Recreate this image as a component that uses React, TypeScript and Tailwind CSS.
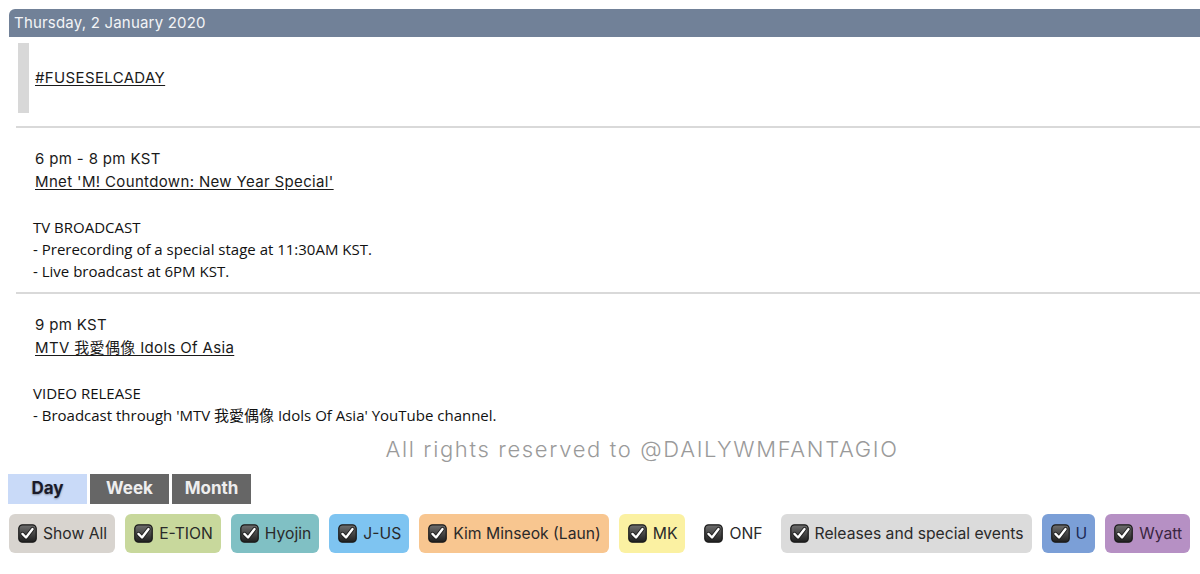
import React from "react"

const heading = "font-['Inter','Noto_Sans_CJK_TC',sans-serif]"
const body = "font-['Open_Sans','Noto_Sans_CJK_TC',sans-serif]"

type Filter = { label: string; bg: string; text: string }

const filters: Filter[] = [
  { label: "Show All", bg: "bg-[#d8d4cf]", text: "text-[#2a2a2a]" },
  { label: "E-TION", bg: "bg-[#c8d89c]", text: "text-[#2a2a2a]" },
  { label: "Hyojin", bg: "bg-[#80c0c4]", text: "text-[#2a2a2a]" },
  { label: "J-US", bg: "bg-[#7ec4f1]", text: "text-[#2a2a2a]" },
  { label: "Kim Minseok (Laun)", bg: "bg-[#f8c690]", text: "text-[#2a2a2a]" },
  { label: "MK", bg: "bg-[#fbf1a2]", text: "text-[#2a2a2a]" },
  { label: "ONF", bg: "bg-transparent", text: "text-[#2a2a2a]" },
  { label: "Releases and special events", bg: "bg-[#dbdbdb]", text: "text-[#2a2a2a]" },
  { label: "U", bg: "bg-[#7b9fd7]", text: "text-[#1c2a55]" },
  { label: "Wyatt", bg: "bg-[#b690c4]", text: "text-[#3a2540]" },
]

// glossy dark checkbox with white tick
const CheckBox = () => (
  <svg width="19" height="19" viewBox="0 0 18 18" className="flex-none">
    <defs>
      <linearGradient id="cbg" x1="0" y1="0" x2="0" y2="1">
        <stop offset="0" stopColor="#707070" />
        <stop offset="1" stopColor="#1e1e1e" />
      </linearGradient>
    </defs>
    <rect x="0.75" y="0.75" width="16.5" height="16.5" rx="3.5" fill="url(#cbg)" stroke="#1a1a1a" strokeWidth="1.2" />
    <path d="M4.2 9.4 L7.6 12.8 L13.8 4.8" fill="none" stroke="#222" strokeWidth="4" strokeLinecap="round" strokeLinejoin="round" />
    <path d="M4.2 9.4 L7.6 12.8 L13.8 4.8" fill="none" stroke="#fff" strokeWidth="2.2" strokeLinecap="round" strokeLinejoin="round" />
  </svg>
)

const Divider = () => <div className="ml-[16px] h-[2px] bg-[#d9d9d9]" />

const Event = ({ time, title, kind, lines }: { time: string; title: string; kind: string; lines: string[] }) => (
  <div className="pl-[33px] pt-[19px]">
    <div className={`${heading} pl-[2px] text-[15px] leading-[23px] tracking-[0.35px] text-[#1a1a1a]`}>{time}</div>
    <div className={`${heading} pl-[2px] text-[15px] leading-[23px] tracking-[0.35px] text-[#1a1a1a] underline underline-offset-2`}>
      {title}
    </div>
    <div className={`${body} mt-[23px] text-[15px] leading-[22px] text-[#111]`}>
      <div>{kind}</div>
      {lines.map((l) => (
        <div key={l}>{l}</div>
      ))}
    </div>
  </div>
)

export default function App() {
  return (
    <div className="w-[1200px] h-[574px] overflow-hidden bg-white">
      <div className={`${heading} ml-[9px] mt-[9px] h-[28px] rounded-tl-[6px] bg-[#718198] pl-[5px] text-[15px] leading-[28px] tracking-[0.2px] text-[#f3f4f6]`}>
        Thursday, 2 January 2020
      </div>

      <div className="pl-[18px] pt-[6px] pb-[13px]">
        <div className="flex h-[70px] items-center border-l-[11px] border-[#d8d8d8] pl-[6px]">
          <span className={`${heading} text-[15px] tracking-[0.35px] text-[#1a1a1a] underline underline-offset-2`}>#FUSESELCADAY</span>
        </div>
      </div>
      <Divider />

      <div className="pb-[10px]">
        <Event
          time="6 pm - 8 pm KST"
          title="Mnet 'M! Countdown: New Year Special'"
          kind="TV BROADCAST"
          lines={["- Prerecording of a special stage at 11:30AM KST.", "- Live broadcast at 6PM KST."]}
        />
      </div>
      <Divider />

      <Event
        time="9 pm KST"
        title="MTV 我愛偶像 Idols Of Asia"
        kind="VIDEO RELEASE"
        lines={["- Broadcast through 'MTV 我愛偶像 Idols Of Asia' YouTube channel."]}
      />

      <div className={`${heading} mt-[8px] pl-[84px] text-center text-[22px] font-light leading-[30px] tracking-[1.65px] text-[#9a9a9a]`}>
        All rights reserved to @DAILYWMFANTAGIO
      </div>

      <div className={`${heading} ml-[8px] mt-[10px] flex gap-[3px] text-[17px] font-bold`}>
        <div className="flex h-[30px] w-[79px] items-center justify-center bg-[#c9daf8] text-[#1b1b2a] [text-shadow:0_1px_2px_rgba(0,0,0,0.35)]">
          Day
        </div>
        <div className="flex h-[30px] w-[79px] items-center justify-center bg-[#666666] text-[#eeeeee]">Week</div>
        <div className="flex h-[30px] w-[79px] items-center justify-center bg-[#666666] text-[#eeeeee]">Month</div>
      </div>

      <div className="ml-[9px] mt-[10px] flex gap-[10px]">
        {filters.map((f) => (
          <div
            key={f.label}
            className={`${heading} ${f.bg} ${f.text} flex h-[39px] flex-none items-center gap-[6px] whitespace-nowrap rounded-[6px] pl-[9px] pr-[8px] text-[15.7px]`}
          >
            <CheckBox />
            <span>{f.label}</span>
          </div>
        ))}
      </div>
    </div>
  )
}
